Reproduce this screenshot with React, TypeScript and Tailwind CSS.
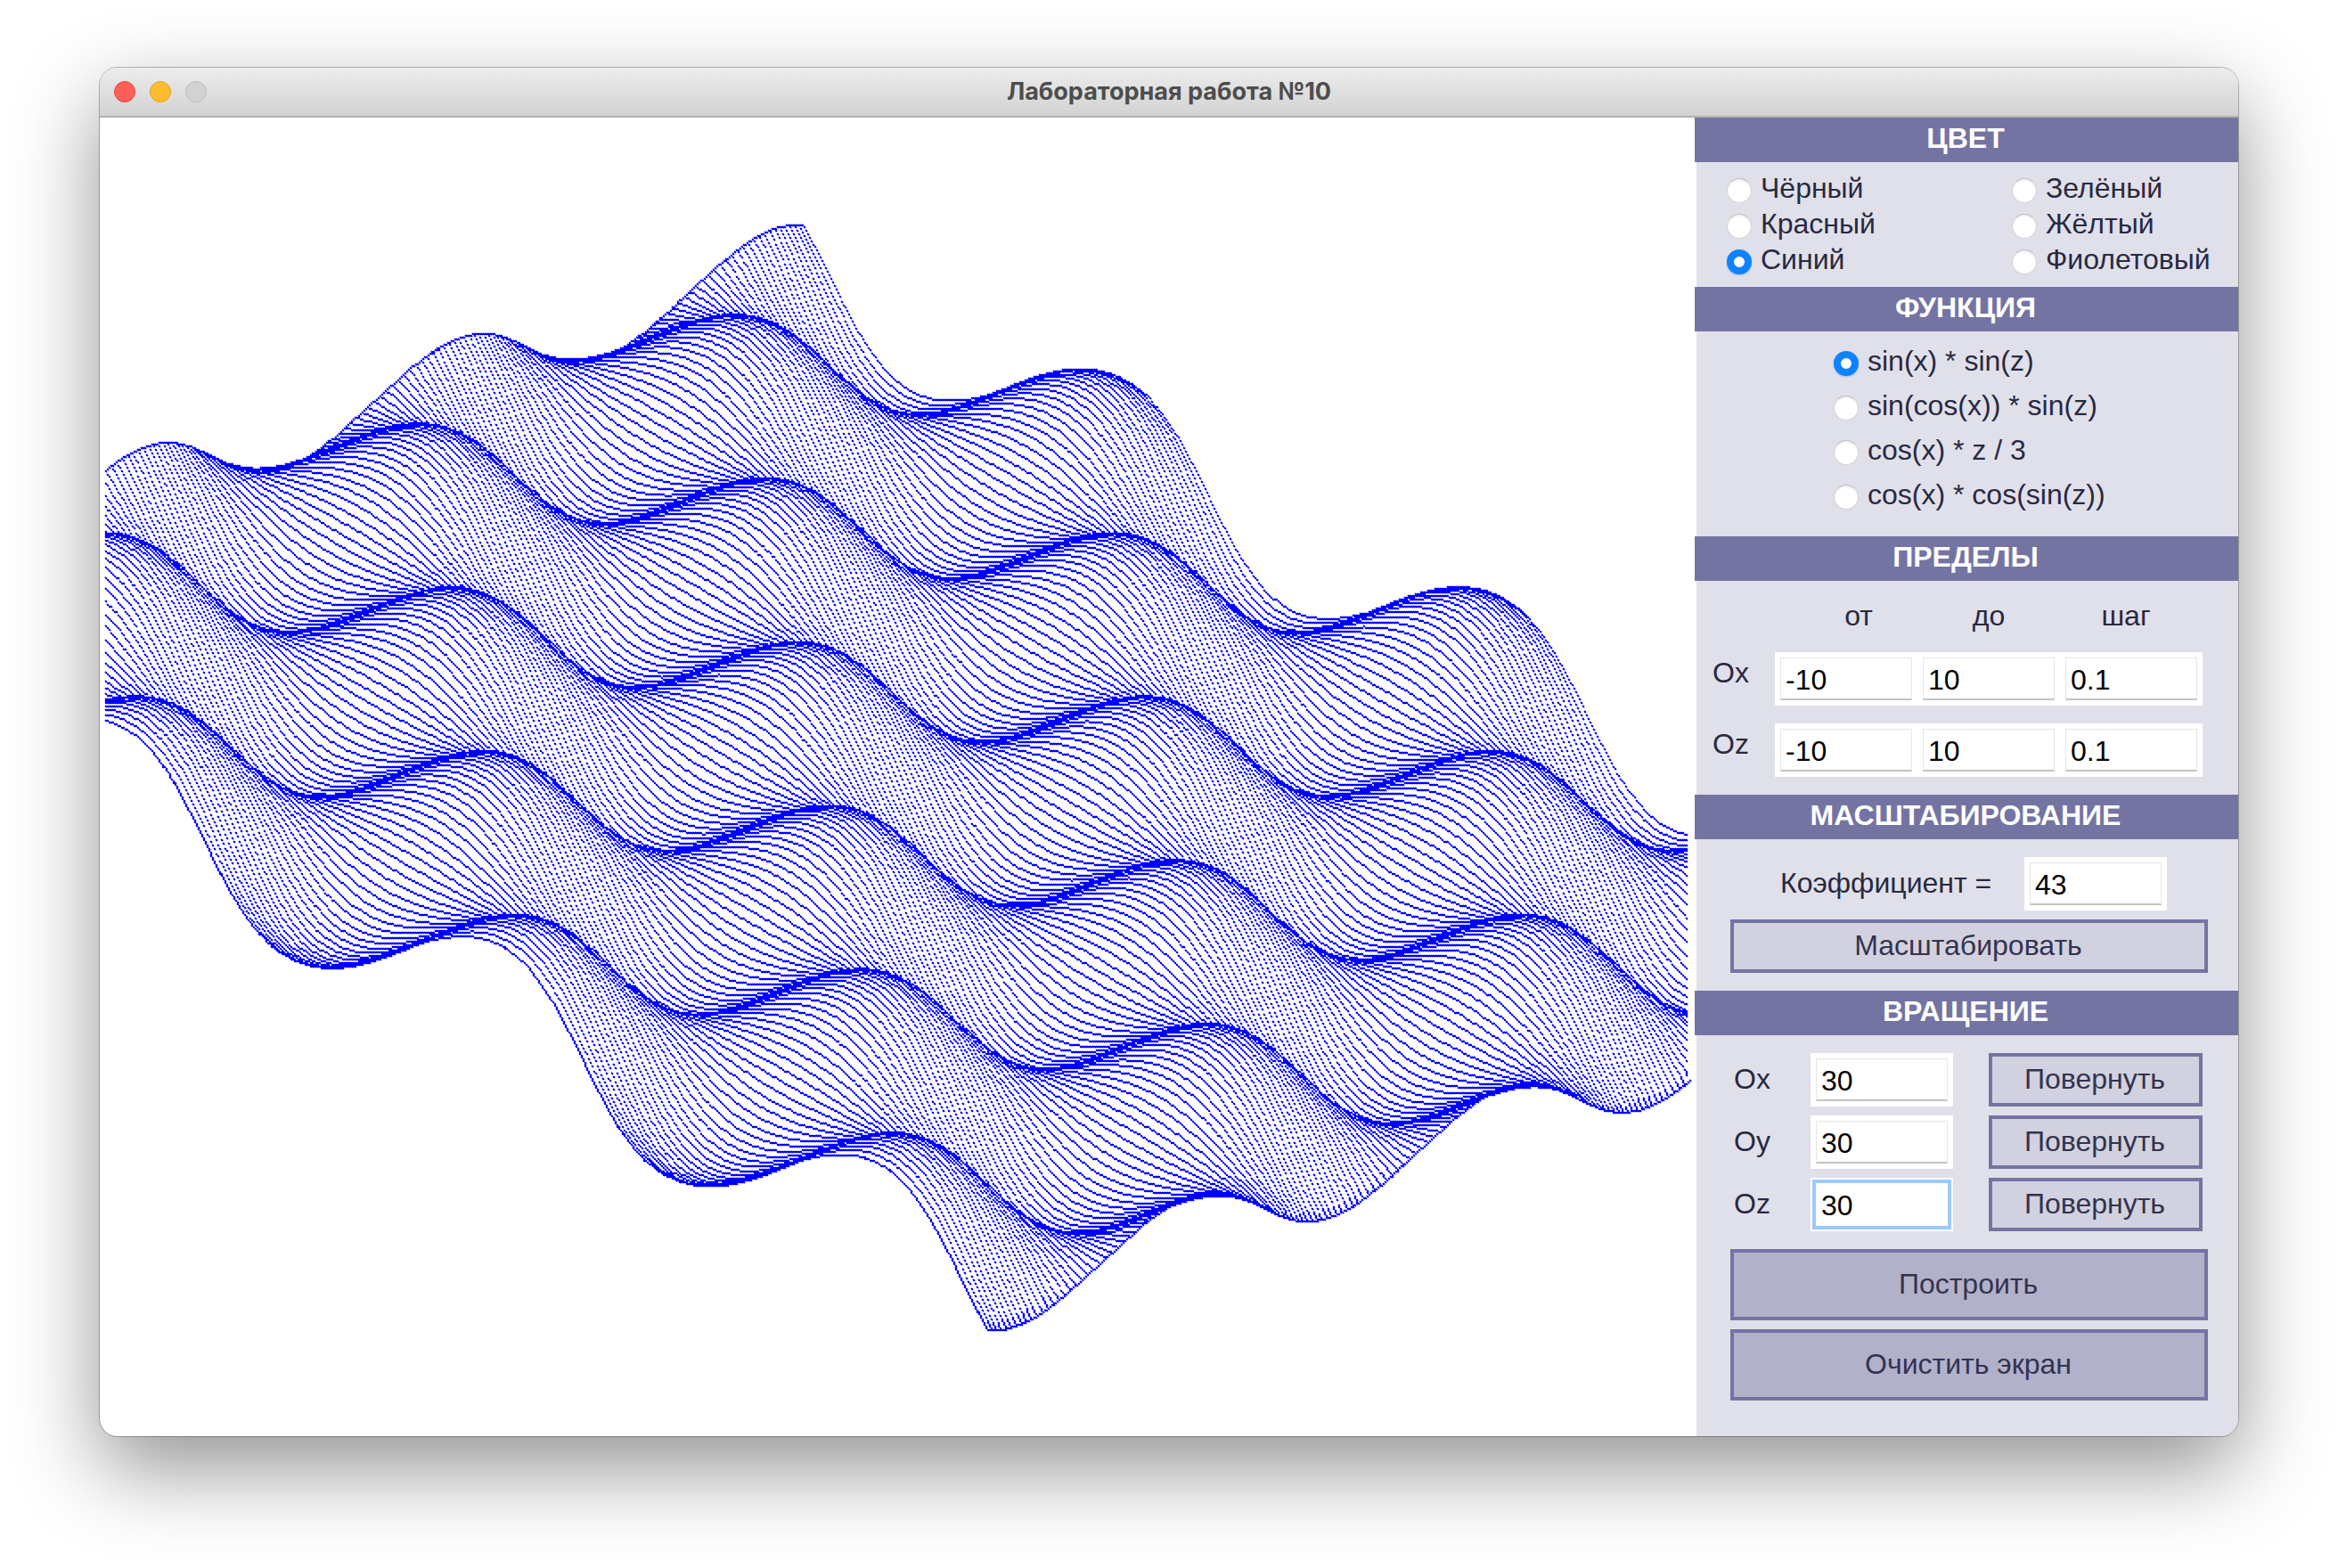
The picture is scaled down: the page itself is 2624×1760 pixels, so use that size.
import React from "react";

const PLOT_W = 1792;
const PLOT_H = 1480;
const PIXEL = 2;
const COLUMNS = 888;
const ORIGIN_X = 6;

const CENTER = { x: 443, y: 370 };
const SCALE = 45;
const ANGLE = Math.PI / 6;
const RANGE = { from: -10, steps: 200, step: 0.1 };

const surface = (x: number, z: number) => -Math.sin(x) * Math.cos(z);

type Point = { x: number; y: number };

function project(x: number, y: number, z: number): Point {
  const c = Math.cos(ANGLE);
  const s = Math.sin(ANGLE);
  const y1 = -y * c - z * s;
  const z1 = -y * s + z * c;
  const x2 = x * c + z1 * s;
  return {
    x: CENTER.x + SCALE * (x2 * c - y1 * s),
    y: CENTER.y + SCALE * (x2 * s + y1 * c),
  };
}

/* Floating horizon: only the parts of each curve above or below everything drawn so far stay visible. */
function buildSurface() {
  const upper = new Array<number>(COLUMNS).fill(-Infinity);
  const lower = new Array<number>(COLUMNS).fill(Infinity);
  const lit = new Set<number>();
  const light = (x: number, y: number) => lit.add(y * 2000 + x);

  const walk = (p: Point, q: Point, visit: (x: number, y: number) => void) => {
    const a = p.x <= q.x ? p : q;
    const b = p.x <= q.x ? q : p;
    const dx = b.x - a.x;
    const dy = b.y - a.y;
    const length = Math.max(Math.abs(dx), Math.abs(dy), 1);
    for (let i = 0; i <= length; i++) {
      visit(Math.round(a.x + (dx * i) / length), Math.round(a.y + (dy * i) / length));
    }
  };

  const masked = (x: number, y: number) => {
    if (x < 0 || x >= COLUMNS) return;
    if (y > upper[x]) {
      upper[x] = y;
      light(x, y);
    }
    if (y < lower[x]) {
      lower[x] = y;
      light(x, y);
    }
  };
  const open = (x: number, y: number) => {
    if (x >= 0 && x < COLUMNS + 2) light(x, y);
  };

  const at = (i: number, j: number) => {
    const x = RANGE.from + i * RANGE.step;
    const z = RANGE.from + j * RANGE.step;
    return project(x, surface(x, z), z);
  };

  for (let j = 0; j <= RANGE.steps; j++) {
    for (let i = 0; i < RANGE.steps; i++) walk(at(i, j), at(i + 1, j), masked);
  }
  for (let j = 0; j < RANGE.steps; j++) {
    walk(at(0, j), at(0, j + 1), open);
    walk(at(RANGE.steps, j), at(RANGE.steps, j + 1), open);
  }

  let core = "";
  let edge = "";
  lit.forEach((key) => {
    const x = ORIGIN_X + (key % 2000) * PIXEL;
    const y = Math.floor(key / 2000) * PIXEL;
    core += `M${x} ${y}h2v2h-2z`;
    edge += `M${x} ${y - 1}h1v1h-1zM${x + 1} ${y + 2}h1v1h-1zM${x - 1} ${y}h1v1h-1zM${x + 2} ${y + 1}h1v1h-1z`;
  });
  return { core, edge };
}

const drawing = buildSurface();

const colors = ["Чёрный", "Зелёный", "Красный", "Жёлтый", "Синий", "Фиолетовый"];
const functions = ["sin(x) * sin(z)", "sin(cos(x)) * sin(z)", "cos(x) * z / 3", "cos(x) * cos(sin(z))"];
const limits = [
  { axis: "Ox", values: ["-10", "10", "0.1"] },
  { axis: "Oz", values: ["-10", "10", "0.1"] },
];
const limitNames = ["от", "до", "шаг"];
const axes = ["Ox", "Oy", "Oz"];

function Heading({ children }: { children: React.ReactNode }) {
  return (
    <h2 className="-ml-0.5 h-[50px] bg-[#7474a3] pr-0.5 text-center text-[32px] leading-[46px] font-bold text-white">
      {children}
    </h2>
  );
}

function Radio({ name, label, checked }: { name: string; label: string; checked: boolean }) {
  return (
    <label className="flex items-start gap-2.5 leading-10 whitespace-nowrap">
      <input
        type="radio"
        name={name}
        defaultChecked={checked}
        className="mt-[9px] size-7 shrink-0 appearance-none rounded-full border border-[#d2d2d6] border-t-[#bcbcc2] bg-white shadow-[inset_0_2px_2px_rgba(0,0,0,0.06)] checked:border-[8px] checked:border-[#0f82ff] checked:shadow-[0_1px_2px_rgba(15,130,255,0.4)]"
      />
      {label}
    </label>
  );
}

function Field({ label, id, value, focused }: { label?: string; id?: string; value: string; focused?: boolean }) {
  const ring = focused ? "border-white ring-4 ring-[#9bcafd]" : "border-[#e6e6e6] border-b-2 border-b-[#c3c3c3]";
  return (
    <div className="h-[60px] w-40 bg-white p-1.5">
      <input
        type="text"
        id={id}
        aria-label={label}
        defaultValue={value}
        className={`block h-12 w-full border bg-white px-[5px] pt-0.5 text-[32px] text-black outline-none ${ring}`}
      />
    </div>
  );
}

function Button({ children, large }: { children: React.ReactNode; large?: boolean }) {
  const look = large ? "h-20 bg-[#b2b1ca] leading-[70px]" : "h-[60px] bg-[#d2d1df] leading-[50px]";
  return (
    <button type="button" className={`block w-full border-4 border-[#7474a3] pr-0.5 pb-0.5 text-center text-[#33334f] ${look}`}>
      {children}
    </button>
  );
}

export default function App() {
  return (
    <div className="min-h-screen bg-white px-28 pt-[76px] pb-[148px] font-['Liberation_Sans',Arial,sans-serif] text-[32px] text-[#29293f]">
      <main className="overflow-hidden rounded-[20px] bg-white shadow-[0_0_0_1px_rgba(0,0,0,0.26),0_36px_96px_rgba(0,0,0,0.43)]">
        <header className="grid h-14 grid-cols-[1fr_auto_1fr] items-center border-b-2 border-[#b1b1b1] bg-linear-to-b from-[#ededed] to-[#d2d2d2] px-4">
          <div className="flex gap-4">
            <button type="button" aria-label="Закрыть" className="size-6 rounded-full border border-[#e2463f] bg-[#ff5f57]" />
            <button type="button" aria-label="Свернуть" className="size-6 rounded-full border border-[#e0a028] bg-[#febc2e]" />
            <button type="button" aria-label="Развернуть" className="size-6 rounded-full border border-[#bdbdbd] bg-[#d2d2d2]" />
          </div>
          <h1 className="font-[Inter,sans-serif] text-[27px] leading-8 font-bold text-[#4d4d4d]">Лабораторная работа №10</h1>
        </header>

        <div className="flex">
          <section aria-label="График" className="flex min-w-0 flex-1">
            <svg viewBox={`0 0 ${PLOT_W} ${PLOT_H}`} className="block w-full" role="img" aria-label="Поверхность">
              <path d={drawing.edge} fill="#0000ff" fillOpacity="0.36" shapeRendering="crispEdges" />
              <path d={drawing.core} fill="#0000ff" shapeRendering="crispEdges" />
            </svg>
          </section>

          <aside className="w-[608px] shrink-0 bg-[#e0e0ea]">
            <Heading>ЦВЕТ</Heading>
            <div className="grid h-[140px] grid-cols-[320px_1fr] content-start pt-[9px] pl-[34px]">
              {colors.map((c) => (
                <Radio key={c} name="color" label={c} checked={c === "Синий"} />
              ))}
            </div>

            <Heading>ФУНКЦИЯ</Heading>
            <div className="flex h-[230px] flex-col gap-2.5 pt-[13px] pl-[154px]">
              {functions.map((f, i) => (
                <Radio key={f} name="function" label={f} checked={i === 0} />
              ))}
            </div>

            <Heading>ПРЕДЕЛЫ</Heading>
            <table className="mb-5 w-[568px] table-fixed border-collapse">
              <thead>
                <tr className="h-20 leading-[78px]">
                  <td className="w-[88px] p-0" />
                  <th scope="col" className="p-0 pl-7 align-top font-normal">{limitNames[0]}</th>
                  <th scope="col" className="p-0 align-top font-normal">{limitNames[1]}</th>
                  <th scope="col" className="p-0 pr-3 align-top font-normal">{limitNames[2]}</th>
                </tr>
              </thead>
              {limits.map((row, r) => (
                <tbody key={row.axis}>
                  {r > 0 && (
                    <tr aria-hidden="true">
                      <td colSpan={4} className="h-5 p-0" />
                    </tr>
                  )}
                  <tr>
                    <th scope="row" className="p-0 pl-[18px] text-left align-top leading-[46px] font-normal">{row.axis}</th>
                    {row.values.map((v, i) => (
                      <td key={limitNames[i]} className="p-0">
                        <Field label={`${row.axis} ${limitNames[i]}`} value={v} />
                      </td>
                    ))}
                  </tr>
                </tbody>
              ))}
            </table>

            <Heading>МАСШТАБИРОВАНИЕ</Heading>
            <div className="h-[170px] pt-5 pr-[34px] pl-[38px]">
              <div className="mb-2.5 flex justify-between pr-[46px] pl-14">
                <label htmlFor="factor" className="leading-[58px]">Коэффициент =</label>
                <Field id="factor" value="43" />
              </div>
              <Button>Масштабировать</Button>
            </div>

            <Heading>ВРАЩЕНИЕ</Heading>
            <div className="flex flex-col gap-2.5 pt-5 pr-10 pl-[42px]">
              {axes.map((axis) => (
                <div key={axis} className="grid grid-cols-[86px_1fr_240px]">
                  <label htmlFor={`angle-${axis}`} className="leading-[58px]">{axis}</label>
                  <Field id={`angle-${axis}`} value="30" focused={axis === "Oz"} />
                  <Button>Повернуть</Button>
                </div>
              ))}
            </div>
            <div className="flex flex-col gap-2.5 pt-5 pr-[34px] pb-10 pl-[38px]">
              <Button large>Построить</Button>
              <Button large>Очистить экран</Button>
            </div>
          </aside>
        </div>
      </main>
    </div>
  );
}
